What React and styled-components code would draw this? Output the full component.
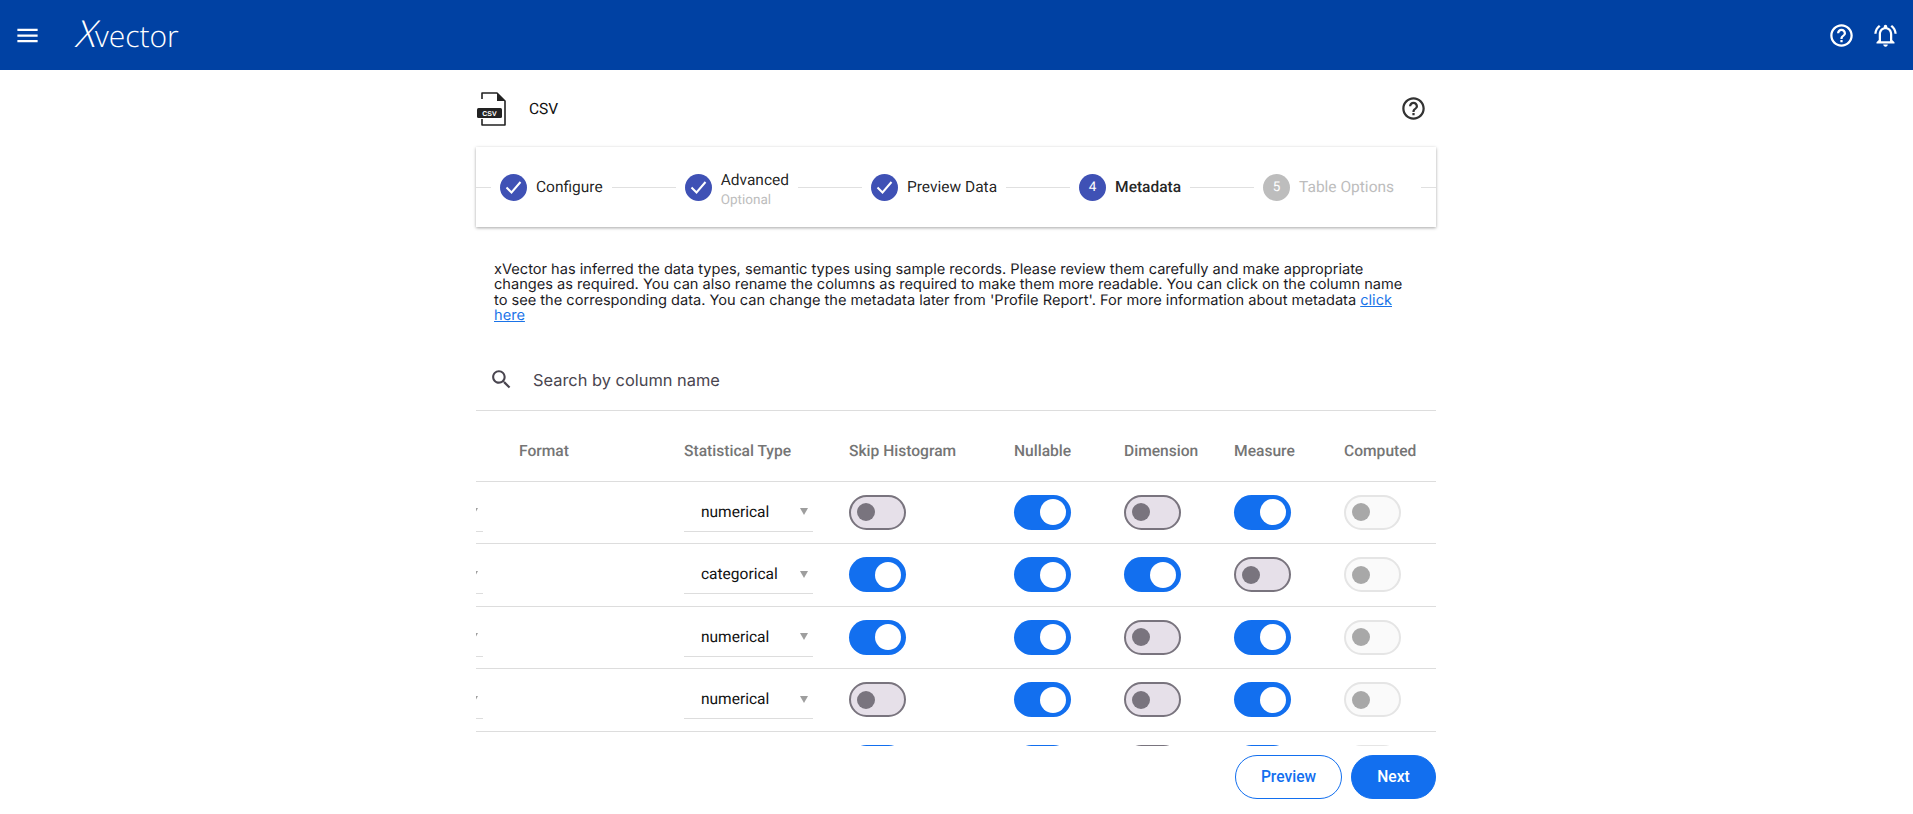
import React from "react";
import styled, { createGlobalStyle } from "styled-components";

const GlobalStyle = createGlobalStyle`
  html, body {
    margin: 0;
    padding: 0;
    background: #fff;
    font-family: Roboto, "Liberation Sans", sans-serif;
    overflow: hidden;
    -webkit-font-smoothing: antialiased;
    text-rendering: geometricPrecision;
  }
`;

// Top bar
const TopBar = styled.header`
  height: 70px;
  background: #0041a3;
  display: flex;
  align-items: center;
  justify-content: space-between;
  padding: 0 14px;
  color: #fff;
`;

const TopGroup = styled.div`
  display: flex;
  align-items: center;
  gap: ${({ $gap }) => $gap}px;
`;

const Logo = styled.div`
  font-family: "Open Sans", sans-serif;
  font-weight: 300;
  font-size: 30px;
  line-height: 1;
  display: flex;
  align-items: baseline;
  margin: -5px 0 0 3px;
`;

const LogoX = styled.span`
  display: inline-block;
  font-size: 37px;
  margin-right: -3px;
  transform: skewX(-14deg);
`;

const Icon = styled.svg`
  width: ${({ $size }) => $size}px;
  height: ${({ $size }) => $size}px;
  fill: ${({ $color }) => $color || "currentColor"};
  flex: none;
  display: block;
`;

// Page body
const Main = styled.main`
  width: 960px;
  margin-left: calc((100% - 961px) / 2);
`;

const TitleRow = styled.div`
  height: 77px;
  display: flex;
  align-items: center;
  justify-content: space-between;
  padding-right: 9px;
`;

const TitleGroup = styled.div`
  display: flex;
  align-items: center;
  gap: 21px;
`;

const Title = styled.span`
  font-size: 15.5px;
  color: #111;
`;

const Stepper = styled.div`
  height: 80px;
  display: flex;
  align-items: center;
  gap: 9px;
  background: #fff;
  box-shadow: 0 1px 3px rgba(0, 0, 0, 0.35);
`;

const Connector = styled.span`
  height: 1px;
  background: #e0e0e0;
  flex: ${({ $end }) => ($end ? "0 0 15px" : "1")};
  margin-left: ${({ $last }) => ($last ? "18px" : "0")};
`;

const Step = styled.div`
  display: flex;
  align-items: center;
  gap: 9px;
`;

const StepCircle = styled.span`
  width: 27px;
  height: 27px;
  border-radius: 50%;
  display: flex;
  align-items: center;
  justify-content: center;
  background: ${({ $disabled }) => ($disabled ? "#bdbdbd" : "#3f51b5")};
  color: #fff;
  font-size: 13.5px;
`;

const StepText = styled.div`
  display: flex;
  flex-direction: column;
  padding-top: ${({ $hasHint }) => ($hasHint ? "5px" : "0")};
`;

const StepLabel = styled.span`
  font-size: 15.5px;
  line-height: 18px;
  font-weight: ${({ $active }) => ($active ? 500 : 400)};
  color: ${({ $disabled }) => ($disabled ? "#bdbdbd" : "rgba(0, 0, 0, 0.87)")};
`;

const StepHint = styled.span`
  font-size: 13.5px;
  line-height: 17px;
  margin-top: 3px;
  color: #bdbdbd;
`;

const Description = styled.p`
  margin: 35px 0 0;
  padding: 0 18px;
  font-family: Inter, sans-serif;
  font-size: 14.6px;
  line-height: 15.4px;
  color: #1c1b1f;
`;

const DocLink = styled.a`
  color: #1a73e8;
  text-decoration: underline;
`;

const SearchRow = styled.div`
  margin-top: 26px;
  height: 60px;
  display: flex;
  align-items: center;
  gap: 19px;
  padding-left: 13px;
  border-bottom: 1px solid #ddd;
`;

const SearchText = styled.span`
  font-family: Inter, sans-serif;
  font-size: 16.4px;
  color: #49454f;
`;

// Metadata table, clipped by its scroll area
const TableArea = styled.div`
  height: 335px;
  overflow: hidden;
`;

const Row = styled.div`
  display: grid;
  grid-template-columns: 43px 165px 165px 165px 110px 110px 110px 92px;
  align-items: center;
  height: ${({ $head }) => ($head ? "70px" : "61.5px")};
  border-bottom: 1px solid #ddd;
`;

const HeadCell = styled.span`
  font-size: 15.6px;
  font-weight: 500;
  color: #757575;
  white-space: nowrap;
  margin-top: 10px;
`;

const SelectBox = styled.div`
  width: 129px;
  height: 39px;
  box-sizing: border-box;
  margin-left: ${({ $shift }) => $shift || 0}px;
  display: flex;
  align-items: center;
  justify-content: space-between;
  padding: 0 5px 0 17px;
  border-bottom: 1px solid #ddd;
  font-size: 15.5px;
  color: #111;
`;

const Caret = styled.span`
  width: 0;
  height: 0;
  border-left: 4px solid transparent;
  border-right: 4px solid transparent;
  border-top: 7px solid #9e9e9e;
`;

const trackStyles = {
  on: "background: #126fef; border: 0 solid #126fef;",
  off: "background: #e6e0e9; border: 2px solid #79747e;",
  disabled: "background: #fafafa; border: 2px solid #e5e5e5;",
};

const thumbColors = { off: "#79747e", disabled: "#a8a8a8" };

const Track = styled.span`
  width: 57px;
  height: 35px;
  box-sizing: border-box;
  border-radius: 18px;
  display: flex;
  align-items: center;
  justify-content: ${({ $state }) => ($state === "on" ? "flex-end" : "flex-start")};
  padding: ${({ $state }) => ($state === "on" ? "0 5px 0 0" : "0 0 0 6px")};
  ${({ $state }) => trackStyles[$state]}
`;

const Thumb = styled.span`
  width: ${({ $state }) => ($state === "on" ? "26px" : "18px")};
  height: ${({ $state }) => ($state === "on" ? "26px" : "18px")};
  border-radius: 50%;
  background: ${({ $state }) => thumbColors[$state] || "#fff"};
`;

const Footer = styled.div`
  margin-top: 9px;
  display: flex;
  justify-content: flex-end;
  gap: 9px;
`;

const PillButton = styled.button`
  height: 44px;
  width: ${({ $width }) => $width}px;
  border-radius: 22px;
  border: 1px solid #126fef;
  background: ${({ $filled }) => ($filled ? "#126fef" : "#fff")};
  color: ${({ $filled }) => ($filled ? "#fff" : "#126fef")};
  font-family: Roboto, sans-serif;
  font-size: 15.6px;
  font-weight: 500;
  padding: 0;
`;

const HELP_PATH =
  "M11 18h2v-2h-2v2zm1-16C6.48 2 2 6.48 2 12s4.48 10 10 10 10-4.48 10-10S17.52 2 12 2zm0 18c-4.41 0-8-3.59-8-8s3.59-8 8-8 8 3.59 8 8-3.59 8-8 8zm0-14c-2.21 0-4 1.79-4 4h2c0-1.1.9-2 2-2s2 .9 2 2c0 2-3 1.75-3 5h2c0-2.25 3-2.5 3-5 0-2.21-1.79-4-4-4z";

const BELL_PATH =
  "M7.58 4.08L6.15 2.65C3.75 4.48 2.17 7.3 2.03 10.5h2c.15-2.65 1.51-4.97 3.55-6.42zm12.39 6.42h2c-.15-3.2-1.73-6.02-4.12-7.85l-1.42 1.43c2.02 1.45 3.39 3.77 3.54 6.42zM18 11c0-3.07-1.64-5.64-4.5-6.32V4c0-.83-.67-1.5-1.5-1.5s-1.5.67-1.5 1.5v.68C7.63 5.36 6 7.92 6 11v5l-2 2v1h16v-1l-2-2v-5zm-2 6H8v-6c0-2.48 1.51-4.5 4-4.5s4 2.02 4 4.5v6zm-4 5c.14 0 .27-.01.4-.04.65-.14 1.18-.58 1.44-1.18.1-.24.15-.5.15-.78h-4c.01 1.1.9 2 2.01 2z";

const MaterialIcon = ({ d, size = 27, color }) => (
  <Icon viewBox="0 0 24 24" $size={size} $color={color}>
    <path d={d} />
  </Icon>
);

const CsvFileIcon = () => (
  <svg width="32" height="36" viewBox="0 0 32 36">
    <path
      d="M6 8V2h15l8 8v24H6v-6"
      fill="none"
      stroke="#222"
      strokeWidth="1.6"
      strokeLinejoin="round"
    />
    <path d="M21 2v8h8z" fill="#222" />
    <rect x="1" y="17" width="25" height="10" rx="1.5" fill="#222" />
    <text
      x="13.5"
      y="24.6"
      textAnchor="middle"
      fontFamily="Liberation Sans, sans-serif"
      fontSize="7"
      fontWeight="700"
      fill="#fff"
    >
      CSV
    </text>
  </svg>
);

const CheckCircle = () => (
  <StepCircle>
    <svg width="17" height="14" viewBox="0 0 17 14">
      <path d="M1.5 7.5l5 5L15.5 2" fill="none" stroke="#fff" strokeWidth="2" />
    </svg>
  </StepCircle>
);

const Toggle = ({ state }) => (
  <Track $state={state}>
    <Thumb $state={state} />
  </Track>
);

const columns = ["Skip Histogram", "Nullable", "Dimension", "Measure", "Computed"];

const rows = [
  { type: "numerical", toggles: ["off", "on", "off", "on", "disabled"] },
  { type: "categorical", toggles: ["on", "on", "on", "off", "disabled"] },
  { type: "numerical", toggles: ["on", "on", "off", "on", "disabled"] },
  { type: "numerical", toggles: ["off", "on", "off", "on", "disabled"] },
  { type: "", toggles: ["on", "on", "off", "on", "disabled"] },
];

export default function App() {
  return (
    <>
      <GlobalStyle />
      <TopBar>
        <TopGroup $gap={34}>
          <MaterialIcon d="M3 18h18v-2H3v2zm0-5h18v-2H3v2zm0-7v2h18V6H3z" />
          <Logo>
            <LogoX>X</LogoX>vector
          </Logo>
        </TopGroup>
        <TopGroup $gap={17}>
          <MaterialIcon d={HELP_PATH} />
          <MaterialIcon d={BELL_PATH} />
        </TopGroup>
      </TopBar>
      <Main>
        <TitleRow>
          <TitleGroup>
            <CsvFileIcon />
            <Title>CSV</Title>
          </TitleGroup>
          <MaterialIcon d={HELP_PATH} color="#333" />
        </TitleRow>
        <Stepper>
          <Connector $end />
          <Step>
            <CheckCircle />
            <StepText>
              <StepLabel>Configure</StepLabel>
            </StepText>
          </Step>
          <Connector />
          <Step>
            <CheckCircle />
            <StepText $hasHint>
              <StepLabel>Advanced</StepLabel>
              <StepHint>Optional</StepHint>
            </StepText>
          </Step>
          <Connector />
          <Step>
            <CheckCircle />
            <StepText>
              <StepLabel>Preview Data</StepLabel>
            </StepText>
          </Step>
          <Connector />
          <Step>
            <StepCircle>4</StepCircle>
            <StepText>
              <StepLabel $active>Metadata</StepLabel>
            </StepText>
          </Step>
          <Connector />
          <Step>
            <StepCircle $disabled>5</StepCircle>
            <StepText>
              <StepLabel $disabled>Table Options</StepLabel>
            </StepText>
          </Step>
          <Connector $end $last />
        </Stepper>
        <Description>
          xVector has inferred the data types, semantic types using sample records. Please review
          them carefully and make appropriate changes as required. You can also rename the columns
          as required to make them more readable. You can click on the column name to see the
          corresponding data. You can change the metadata later from 'Profile Report'. For more
          information about metadata <DocLink href="#">click here</DocLink>
        </Description>
        <SearchRow>
          <MaterialIcon
            size={25}
            color="#49454f"
            d="M15.5 14h-.79l-.28-.27C15.41 12.59 16 11.11 16 9.5 16 5.91 13.09 3 9.5 3S3 5.91 3 9.5 5.91 16 9.5 16c1.61 0 3.09-.59 4.23-1.57l.27.28v.79l5 4.99L20.49 19l-4.99-5zm-6 0C7.01 14 5 11.99 5 9.5S7.01 5 9.5 5 14 7.01 14 9.5 11.99 14 9.5 14z"
          />
          <SearchText>Search by column name</SearchText>
        </SearchRow>
        <TableArea>
          <Row $head>
            <span />
            <HeadCell>Format</HeadCell>
            <HeadCell>Statistical Type</HeadCell>
            {columns.map((name) => (
              <HeadCell key={name}>{name}</HeadCell>
            ))}
          </Row>
          {rows.map((row, i) => (
            <Row key={i}>
              <SelectBox $shift={-122}>
                <span />
                <Caret />
              </SelectBox>
              <span />
              <SelectBox>
                {row.type}
                <Caret />
              </SelectBox>
              {row.toggles.map((state, j) => (
                <Toggle key={j} state={state} />
              ))}
            </Row>
          ))}
        </TableArea>
        <Footer>
          <PillButton $width={107}>Preview</PillButton>
          <PillButton $width={85} $filled>
            Next
          </PillButton>
        </Footer>
      </Main>
    </>
  );
}
